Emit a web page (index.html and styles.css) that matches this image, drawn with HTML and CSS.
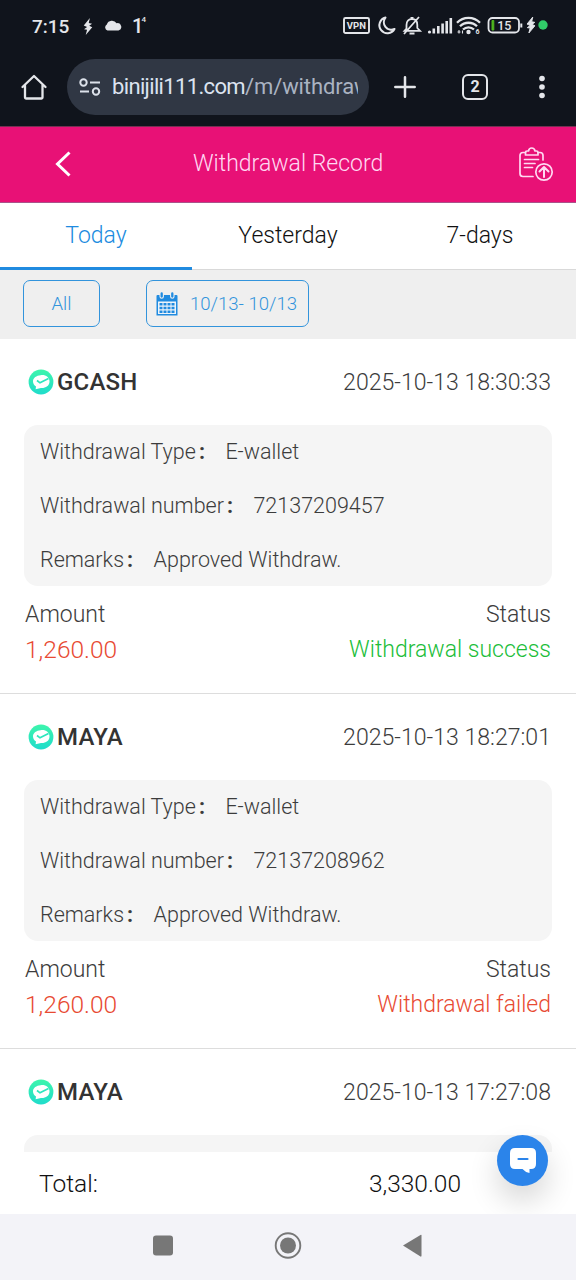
FILE: index.html
```html
<!DOCTYPE html>
<html lang="en">
<head>
<meta charset="utf-8">
<title>Withdrawal Record</title>
<link rel="stylesheet" href="styles.css">
</head>
<body>
<svg class="defs" width="0" height="0">
  <defs>
    <linearGradient id="mint" x1="0" y1="0" x2="0" y2="1"><stop offset="0" stop-color="#3df5ac"/><stop offset="1" stop-color="#1fdccb"/></linearGradient>
    <symbol id="pay" viewBox="0 0 26 26">
      <circle cx="13" cy="13" r="12.4" fill="url(#mint)"/>
      <path d="M12.500 6.300C17 5.300 21.500 8 21.500 12.500C21.500 17 17.500 19.300 13 19L7.600 20.300L8 17.600C6 16.200 5 14.500 5 12.200C5 9 8.500 6.600 12.500 6.300Z" fill="#fff"/>
      <path d="M9 11.500L12 13.800L20.500 9.600" fill="none" stroke="#2be6bd" stroke-width="1.700"/>
    </symbol>
    <symbol id="bolt" viewBox="0 0 10 18"><path d="M7 0L0.500 8L4 9.500L0.800 12L4 12.500L2.600 18L9.500 9.800L6.300 8.300L9.300 6L5.800 5.300Z" fill="#e4e6ea"/></symbol>
  </defs>
</svg>
<div class="phone">
  <header class="system">
    <div class="status">
      <span class="clock">7:15</span>
      <svg class="st-bolt" width="10" height="17"><use href="#bolt"/></svg>
      <svg class="cloud" width="18" height="11" viewBox="0 0 18 11"><path d="M3.500 10.500A3.300 3.300 0 0 1 2.800 4.500A5.500 5.500 0 0 1 12.600 3.300A3.600 3.600 0 0 1 14.500 10.500Z" fill="#e4e6ea"/></svg>
      <span class="temp">1<sup>4</sup></span>
      <svg class="tray" width="208" height="22" viewBox="0 0 208 22" fill="none" stroke="#e4e6ea">
        <rect x="1" y="3" width="25" height="15" rx="1.500" stroke-width="1.900"/>
        <text x="3.800" y="14.100" class="vpn">VPN</text>
        <path d="M42.500 2.500A8 8 0 1 0 51.500 14A7.500 7.500 0 0 1 42.500 2.500Z" stroke-width="2" stroke-linejoin="round"/>
        <path d="M63.500 15.500V10C63.500 6 65.500 4 69 4C72.500 4 74.300 6 74.300 10V13L77 15.800H61.500L63.500 13.500M61 19L76 2M66.500 18.500H71.500M67.500 3H70.500" stroke-width="1.800"/>
        <g fill="#e4e6ea" stroke="none"><circle cx="86.500" cy="17" r="1.600"/><rect x="89.500" y="13.500" width="2.600" height="5"/><rect x="94" y="11" width="2.600" height="7.500"/><rect x="98.300" y="8.500" width="2.600" height="10"/><rect x="102.400" y="6" width="2.600" height="12.500"/><rect x="106.500" y="3" width="2.600" height="15.500"/><circle cx="125.500" cy="17" r="2.200"/></g>
        <path d="M114 7.800A16 16 0 0 1 137 7.800M117 11.300A12 12 0 0 1 134 11.300M120 14.500A8 8 0 0 1 131 14.500" stroke-width="2.300"/>
        <text x="132.500" y="19" class="wifi-mark">6</text>
        <path d="M116 18.500V15M114.500 17H117.500M119.500 18.500V15.500" stroke-width="1.100"/>
        <rect x="145.500" y="3" width="30.500" height="14.500" rx="4" stroke-width="1.800"/>
        <path d="M149 5.500H150.800V15H149Z" fill="#4eb51f" stroke="#4eb51f"/>
        <path d="M178.300 8.500V12.500" stroke-width="2"/>
        <text x="154.200" y="14.600" class="charge">15</text>
        <svg x="183.500" y="2" width="9" height="16"><use href="#bolt"/></svg>
        <circle cx="200" cy="10" r="4.700" fill="#31cc68" stroke="none"/>
      </svg>
    </div>
    <div class="browser">
      <svg class="home" width="28" height="28" viewBox="0 0 28 28" fill="none" stroke="#e4e6ea" stroke-width="2.300" stroke-linejoin="round" stroke-linecap="round"><path d="M2.500 14L14 3L25.500 14M5 12V24.500Q5 25.500 6 25.500H21.500Q22.500 25.500 22.500 24.500V12"/></svg>
      <div class="omnibox">
        <svg width="22" height="18" viewBox="0 0 22 18" fill="none" stroke="#dce1ea" stroke-width="2"><circle cx="4.500" cy="4.500" r="3.200"/><path d="M11 4.500H21M1 13.500H10"/><circle cx="17" cy="13.500" r="3.200"/></svg>
        <span class="url">binijili111.com<i>/m/withdraw</i></span>
      </div>
      <svg class="plus" width="22" height="22" viewBox="0 0 22 22" stroke="#e4e6ea" stroke-width="2.500" stroke-linecap="round"><path d="M1.300 11H20.700M11 1.300V20.700"/></svg>
      <span class="tabcount">2</span>
      <svg class="dots" width="6" height="24" fill="#e4e6ea"><circle cx="3" cy="3.500" r="2.800"/><circle cx="3" cy="12" r="2.800"/><circle cx="3" cy="20.500" r="2.800"/></svg>
    </div>
  </header>

  <div class="titlebar">
    <svg class="back" width="17" height="28" viewBox="0 0 17 28" fill="none" stroke="#fff" stroke-width="3"><path d="M15.500 2.500L3.500 14L15.500 25.500"/></svg>
    <h1>Withdrawal Record</h1>
    <svg class="records" width="36" height="36" viewBox="0 0 36 36" fill="none" stroke="#ffd9f2" stroke-width="1.700" stroke-linejoin="round" stroke-linecap="round">
      <path d="M7.500 6.500H5Q2 6.500 2 9.500V27.500Q2 30.500 5 30.500H15M20 6.500H22Q25 6.500 25 9.500V14"/>
      <path d="M7.500 9V6.500Q7.500 5 9 5H10.500Q11 2 13.700 2Q16.500 2 17 5H18.500Q20 5 20 6.500V9Z"/>
      <path d="M6.500 13.500H20.500M6.500 17.500H17M6.500 21.500H14.500"/>
      <circle cx="26" cy="26" r="8.200"/><path d="M26 31V21.500M21.500 25.500L26 21L30.500 25.500" stroke-width="2"/>
    </svg>
  </div>

  <nav class="tabs"><span class="tab active">Today</span><span class="tab">Yesterday</span><span class="tab">7-days</span></nav>

  <div class="filters">
    <span class="pill all">All</span>
    <span class="pill range">
      <svg width="22" height="24" viewBox="0 0 22 24"><path d="M1.500 3H20.500Q21.500 3 21.500 4V23.500H0.500V4Q0.500 3 1.500 3Z" fill="#208be0"/><path d="M2 9.500H20V22H2Z" fill="#edf4fa"/><path d="M5.700 .5V4.500M16.300 .5V4.500" stroke="#efefef" stroke-width="4.500" stroke-linecap="round"/><path d="M5.700 1.500V4.500M16.300 1.500V4.500" stroke="#208be0" stroke-width="2.300" stroke-linecap="round"/><path d="M3.500 12.200H18.500M3.500 16H18.500M3.500 19.800H18.500" stroke="#208be0" stroke-width="2.400" stroke-dasharray="3 1"/></svg>
      <span>10/13- 10/13</span>
    </span>
  </div>

  <main class="records-list">
    <article class="record">
      <div class="head"><svg width="26" height="26"><use href="#pay"/></svg><b>GCASH</b><time>2025-10-13 18:30:33</time></div>
      <dl class="details">
        <div><dt>Withdrawal Type<i>:</i></dt><dd>E-wallet</dd></div>
        <div><dt>Withdrawal number<i>:</i></dt><dd>72137209457</dd></div>
        <div><dt>Remarks<i>:</i></dt><dd>Approved Withdraw.</dd></div>
      </dl>
      <div class="labels"><span>Amount</span><span>Status</span></div>
      <div class="values"><span class="amount">1,260.00</span><span class="success">Withdrawal success</span></div>
    </article>
    <article class="record">
      <div class="head"><svg width="26" height="26"><use href="#pay"/></svg><b>MAYA</b><time>2025-10-13 18:27:01</time></div>
      <dl class="details">
        <div><dt>Withdrawal Type<i>:</i></dt><dd>E-wallet</dd></div>
        <div><dt>Withdrawal number<i>:</i></dt><dd>72137208962</dd></div>
        <div><dt>Remarks<i>:</i></dt><dd>Approved Withdraw.</dd></div>
      </dl>
      <div class="labels"><span>Amount</span><span>Status</span></div>
      <div class="values"><span class="amount">1,260.00</span><span class="failed">Withdrawal failed</span></div>
    </article>
    <article class="record">
      <div class="head"><svg width="26" height="26"><use href="#pay"/></svg><b>MAYA</b><time>2025-10-13 17:27:08</time></div>
      <div class="details"></div>
    </article>
  </main>

  <footer class="total">
    <span>Total:</span><span class="sum">3,330.00</span>
    <div class="chat"><svg width="26" height="26" viewBox="0 0 26 26"><path d="M5 0H21Q26 0 26 5V16Q26 21 21 21H19.500L19.500 25Q15 24 12.500 21H5Q0 21 0 16V5Q0 0 5 0Z" fill="#fff"/><path d="M8.500 11H17.500" stroke="#2b84ea" stroke-width="2.200" stroke-linecap="round"/></svg></div>
  </footer>
  <div class="sysnav">
    <svg width="270" height="28" viewBox="0 0 270 28" fill="#777"><rect x="0" y="4.500" width="20" height="20" rx="3"/><circle cx="135" cy="14.500" r="12.300" fill="none" stroke="#777" stroke-width="1.900"/><circle cx="135" cy="14.500" r="8"/><path d="M250 14.500L267.500 4Q268.500 3.500 268.500 4.500V24.500Q268.500 26 267.500 25.500Z"/></svg>
  </div>
</div>
</body>
</html>
```
FILE: styles.css
```css
* { box-sizing: border-box; }
body { margin: 0; background: #fff; color: #3c3c3c; font-family: Roboto, "Liberation Sans", sans-serif; font-weight: 300; }
.defs { position: absolute; }
.phone { width: 576px; height: 1280px; display: flex; flex-direction: column; overflow: hidden; }
span, time, b, dt, dd { white-space: nowrap; }

.system { height: 126px; flex: none; background: #10141c; color: #e4e6ea; }
.status { height: 50px; display: flex; align-items: center; padding: 2px 0 0 32px; }
.clock { width: 51px; font-size: 19px; font-weight: 500; }
.cloud { margin-left: 11px; margin-top: -2px; }
.temp { margin-left: 10px; font-size: 20px; font-weight: 500; line-height: 22px; display: flex; width: 22px; }
.temp sup { font-size: 8px; line-height: 9px; margin-left: -2px; }
.tray { margin-left: 189px; }
.vpn, .charge, .wifi-mark { fill: #e4e6ea; stroke: none; font-weight: 700; }
.vpn { font-size: 9.500px; }
.charge { font-size: 12.500px; font-weight: 500; }
.wifi-mark { font-size: 7px; }
.browser { height: 76px; display: flex; align-items: center; padding: 0 0 2px 20px; }
.omnibox { width: 302px; height: 56px; margin-left: 19px; border-radius: 28px; background: #303744; display: flex; align-items: center; gap: 11px; padding: 0 11px 0 12px; }
.url { flex: 1; overflow: hidden; font-size: 22px; font-weight: 400; letter-spacing: -.65px; color: #dce3f0; line-height: 32px; }
.url i { font-style: normal; letter-spacing: -.1px; color: #aab3c2; }
.plus { margin-left: 25px; }
.tabcount { width: 26px; height: 26px; margin-left: 46px; border: 2.500px solid #e4e6ea; border-radius: 6px; text-align: center; font-size: 16px; line-height: 22px; font-weight: 700; }
.dots { margin-left: 51px; }

.titlebar { height: 77px; flex: none; background: #e81176; border-top: 1px solid #753052; border-bottom: 1px solid #a9538a; display: flex; align-items: center; padding: 0 22px 2px 54px; color: #ffd9f2; }
.titlebar h1 { margin: 1px 0 0 122px; font-size: 23px; font-weight: 300; line-height: 28px; }
.records { margin-left: auto; }

.tabs { height: 67px; flex: none; display: grid; grid-template-columns: repeat(3, 1fr); border-bottom: 1px solid #d9d9d9; }
.tab { height: 67px; text-align: center; line-height: 66px; font-size: 23px; color: #111; }
.tab.active { color: #208be0; border-bottom: 3px solid #208be0; }

.filters { height: 69px; flex: none; background: #efefef; display: flex; gap: 46px; padding: 10px 23px; }
.pill { height: 47px; border: 1.500px solid #3294dc; border-radius: 7px; display: flex; align-items: center; justify-content: center; color: #3294dc; font-size: 18.600px; }
.all { width: 77px; }
.range { width: 163px; gap: 12px; padding-right: 2px; }

.records-list { height: 813px; flex: none; overflow: hidden; }
.record { height: 355px; padding: 0 24px; border-bottom: 1px solid #ddd; }
.head { height: 86px; display: flex; align-items: center; padding: 0 0 0 4px; }
.head b { margin-left: 3px; color: #333; font-size: 24px; font-weight: 500; letter-spacing: .2px; }
.head time { margin-left: auto; padding-right: 1px; font-size: 23.100px; }
.details { margin: 0; height: 161px; border-radius: 14px; background: #f5f5f5; padding: 0 16px; }
.details div { height: 54px; display: flex; align-items: center; padding-bottom: 2px; font-size: 21.500px; }
.details dt i { font-style: normal; font-weight: 700; display: inline-block; width: 29.500px; padding-left: 3px; }
.details dd { margin: 0; }
.labels, .values { display: flex; justify-content: space-between; padding: 0 1px; }
.labels { padding-top: 11px; line-height: 36px; font-size: 23px; }
.values { line-height: 33px; font-size: 23px; }
.amount { font-size: 24.500px; }
.amount, .failed { color: #e84a32; }
.success { color: #20bd38; }

.total { position: relative; height: 62px; flex: none; background: #fff; display: flex; align-items: center; padding: 0 115px 0 39px; justify-content: space-between; font-size: 24.500px; color: #111; }
.chat { position: absolute; left: 497px; top: -17px; width: 51px; height: 51px; border-radius: 50%; background: #2b84ea; display: grid; place-items: center; box-shadow: 0 15px 30px rgba(0,0,0,.16); }
.sysnav { position: relative; flex: 1; background: #f3f3f8; display: flex; justify-content: center; padding-top: 17px; }
```
